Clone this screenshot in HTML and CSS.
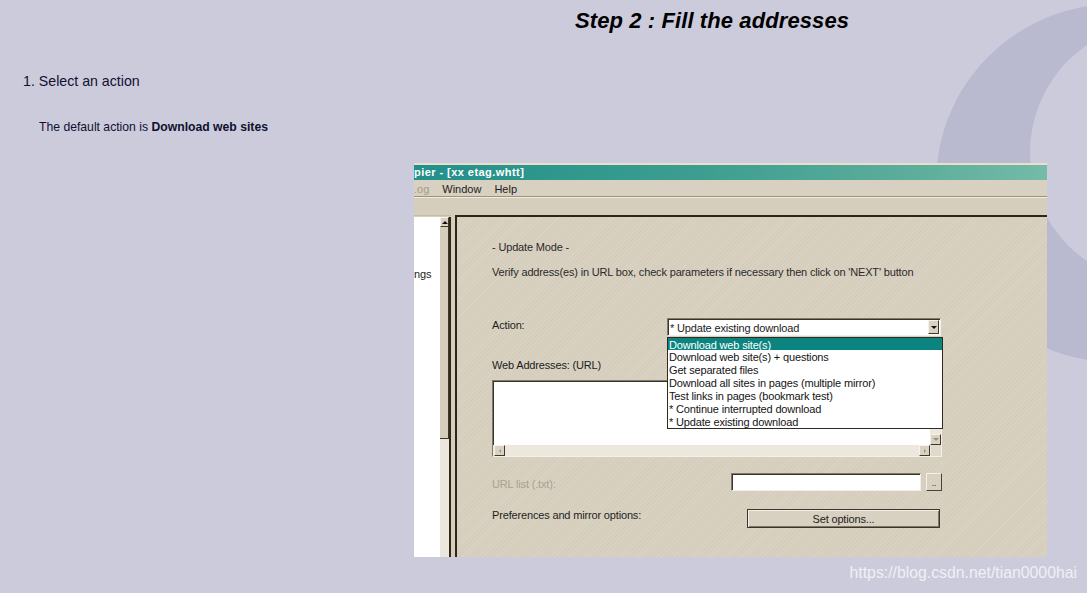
FILE: index.html
```html
<!DOCTYPE html>
<html lang="en">
<head>
<meta charset="utf-8">
<title>Step 2 : Fill the addresses</title>
<link rel="stylesheet" href="styles.css">
</head>
<body>
<div class="page">
  <svg class="deco" width="1087" height="593" viewBox="0 0 1087 593" aria-hidden="true">
    <circle cx="1115" cy="183" r="179" fill="#b9b9d0"/>
    <circle cx="1161" cy="153" r="131" fill="#cccbdc"/>
  </svg>

  <h1 class="title">Step 2 : Fill the addresses</h1>
  <p class="step">1. Select an action</p>
  <p class="default">The default action is <b>Download web sites</b></p>

  <div class="shot">
    <div class="topedge"></div>
    <div class="titlebar">pier - [xx etag.whtt]</div>
    <div class="menubar">
      <span class="menu-dis">.og</span>
      <span class="menu-item">Window</span>
      <span class="menu-item">Help</span>
    </div>
    <div class="toolbar"></div>
    <div class="work">
      <div class="tree">
        <div class="treelist"><span class="tree-item">ngs</span></div>
        <div class="vscroll">
          <div class="sbtn"><span class="tri tri-up"></span></div>
          <div class="thumb"></div>
          <div class="track"></div>
        </div>
      </div>
      <div class="gap"></div>
      <div class="panel">
        <div class="mode">- Update Mode -</div>
        <div class="verify">Verify address(es) in URL box, check parameters if necessary then click on 'NEXT' button</div>

        <div class="row row-action">
          <div class="label label-action">Action:</div>
          <div class="combo">
            <div class="combo-text">* Update existing download</div>
            <div class="combo-btn"><span class="tri tri-down"></span></div>
            <ul class="dropdown">
              <li class="sel">Download web site(s)</li>
              <li>Download web site(s) + questions</li>
              <li>Get separated files</li>
              <li>Download all sites in pages (multiple mirror)</li>
              <li>Test links in pages (bookmark test)</li>
              <li>* Continue interrupted download</li>
              <li>* Update existing download</li>
            </ul>
          </div>
        </div>

        <div class="weblabel">Web Addresses: (URL)</div>
        <div class="textarea">
          <div class="ta-body">
            <div class="ta-white"></div>
            <div class="ta-vs">
              <div class="ta-vtrack"></div>
              <div class="sbtn sbtn-sm"><span class="tri tri-down tri-grey"></span></div>
            </div>
          </div>
          <div class="ta-hs">
            <div class="sbtn sbtn-sm"><span class="tri tri-left"></span></div>
            <div class="ta-htrack"></div>
            <div class="sbtn sbtn-sm"><span class="tri tri-right"></span></div>
            <div class="ta-corner"></div>
          </div>
        </div>

        <div class="row row-url">
          <div class="label label-dis">URL list (.txt):</div>
          <div class="urlgroup">
            <div class="field"></div>
            <div class="dots">..</div>
          </div>
        </div>

        <div class="row row-prefs">
          <div class="label">Preferences and mirror options:</div>
          <div class="setbtn">Set options...</div>
        </div>
      </div>
    </div>
  </div>

  <div class="watermark">https://blog.csdn.net/tian0000hai</div>
</div>
</body>
</html>
```

FILE: styles.css
```css
* { box-sizing: border-box; }

body {
  margin: 0;
  background: #cccbdc;
}

.page {
  position: relative;
  width: 1087px;
  height: 593px;
  overflow: hidden;
  background: #cccbdc;
  font-family: "Liberation Sans", Arial, sans-serif;
}

.deco {
  position: absolute;
  left: 0;
  top: 0;
}

.title,
.step,
.default,
.shot {
  position: relative;
}

.title {
  margin: 0;
  padding: 9px 0 0 575px;
  font-size: 22px;
  line-height: 24px;
  font-weight: bold;
  font-style: italic;
  letter-spacing: 0.1px;
  color: #000;
}

.step {
  margin: 39px 0 0 0;
  padding-left: 23px;
  font-size: 14.2px;
  line-height: 18px;
  color: #101030;
}

.default {
  margin: 29px 0 0 0;
  padding-left: 39px;
  font-size: 12.2px;
  line-height: 16px;
  color: #101030;
}

.default b { font-weight: bold; }

/* ---------- window screenshot ---------- */
.shot {
  margin: 28px 0 0 414px;
  width: 633px;
  height: 394px;
  display: flex;
  flex-direction: column;
  background: #d6cebd;
  font-family: "Liberation Sans", Arial, sans-serif;
  font-size: 11px;
  letter-spacing: -0.16px;
  color: #1c1c1c;
  overflow: hidden;
}

.topedge {
  height: 2px;
  background: #e9dfcc;
}

.titlebar {
  height: 15px;
  line-height: 15px;
  color: #fff;
  font-weight: bold;
  font-size: 11px;
  letter-spacing: 0.45px;
  background: linear-gradient(to right, #22908a, #3c9e90 45%, #5eae9c 80%, #74bba8);
}

.menubar {
  height: 16px;
  display: flex;
  align-items: center;
  gap: 13px;
  background: #d8d0c0;
  padding-top: 1px;
  letter-spacing: 0;
}

.menu-dis { color: #a49c8c; }

.toolbar {
  height: 19px;
  border-top: 1px solid #9e927c;
  box-shadow: inset 0 1px 0 #f1ece2;
  background: #d6cebd;
}

.work {
  flex: 1;
  display: flex;
  min-height: 0;
}

.tree {
  width: 37px;
  display: flex;
  border-top: 1px solid #c4baa6;
}

.treelist {
  width: 26px;
  background: #fff;
  padding-top: 51px;
  line-height: 13px;
  margin-top: 1px;
}

.tree-item { display: block; }

.vscroll {
  width: 11px;
  display: flex;
  flex-direction: column;
  border-right: 2px solid #2e2818;
  margin-top: 1px;
}

.sbtn {
  width: 9px;
  height: 10px;
  background: #d9d2c3;
  border: 1px solid;
  border-color: #f6f2ea #3e382c #3e382c #f6f2ea;
  display: flex;
  align-items: center;
  justify-content: center;
  flex: none;
}

.thumb {
  height: 212px;
  background: #d6cebd;
  border-bottom: 1px solid #3e382c;
  border-right: 1px solid #3e382c;
}

.track {
  flex: 1;
  background: #ebe7dc;
}

.tri {
  width: 0;
  height: 0;
  border: 3px solid transparent;
}

.tri-up { border-bottom-color: #111; border-top-width: 0; }
.tri-down { border-top-color: #111; border-bottom-width: 0; }
.tri-grey { border-top-color: #9a9080; }
.tri-left { border-right-color: #9a9080; border-width: 2px 2px 2px 0; }
.tri-right { border-left-color: #9a9080; border-width: 2px 0 2px 2px; }

.gap {
  width: 4px;
}

.panel {
  flex: 1;
  border-left: 2px solid #2c2618;
  border-top: 2px solid #2c2618;
  padding: 0 105px 0 35px;
  background-color: #d6cebd;
  background-image: repeating-linear-gradient(135deg, rgba(255,255,255,0.10) 0 1px, rgba(0,0,0,0) 1px 3px);
  line-height: 13px;
}

.mode { margin-top: 24px; color: #2a2a2a; }

.verify {
  margin-top: 12px;
  white-space: nowrap;
  color: #2a2a2a;
}

.row {
  display: flex;
  justify-content: space-between;
  align-items: flex-start;
}

.row-action { margin-top: 39px; height: 18px; }

.label { color: #1e1e1e; white-space: nowrap; }
.label-action { padding-top: 1px; }
.label-dis { color: #a9a190; padding-top: 5px; }

.combo {
  position: relative;
  width: 274px;
  height: 18px;
  margin-right: 1px;
  background: #fff;
  border: 1px solid;
  border-color: #827a68 #f4f0e8 #f4f0e8 #827a68;
  box-shadow: inset 1px 1px 0 #3a3426;
  display: flex;
  align-items: center;
}

.combo-text {
  flex: 1;
  padding-left: 2px;
  padding-top: 2px;
  white-space: nowrap;
}

.combo-btn {
  width: 11px;
  height: 14px;
  margin-right: 1px;
  background: #d9d2c3;
  border: 1px solid;
  border-color: #f6f2ea #3e382c #3e382c #f6f2ea;
  display: flex;
  align-items: center;
  justify-content: center;
}

.dropdown {
  position: absolute;
  left: -1px;
  top: 18px;
  width: 276px;
  height: 92px;
  margin: 0;
  padding: 0;
  list-style: none;
  background: #fff;
  border: 1px solid #2e2a24;
  z-index: 2;
}

.dropdown li {
  height: 13px;
  line-height: 13px;
  padding: 1px 0 0 1px;
  white-space: nowrap;
  color: #141414;
}

.dropdown li.sel {
  background: #0b8480;
  color: #fff;
  height: 12px;
  line-height: 12px;
}

.weblabel { margin-top: 23px; }

.textarea {
  margin-top: 8px;
  width: 450px;
  height: 77px;
  display: flex;
  flex-direction: column;
  border: 1px solid;
  border-color: #827a68 #f4f0e8 #f4f0e8 #827a68;
  box-shadow: inset 1px 1px 0 #3a3426;
  background: #fff;
}

.ta-body {
  flex: 1;
  display: flex;
}

.ta-white { flex: 1; }

.ta-vs {
  width: 11px;
  display: flex;
  flex-direction: column;
}

.ta-vtrack { flex: 1; background: #ece8de; }

.sbtn-sm { width: 11px; height: 11px; }

.ta-hs {
  height: 11px;
  display: flex;
  background: #ece8de;
  padding-left: 1px;
}

.ta-htrack { flex: 1; }

.ta-corner {
  width: 11px;
  background: #e0dacd;
  border-left: 1px solid #ece8de;
}

.row-url { margin-top: 16px; height: 18px; }

.urlgroup {
  width: 211px;
  display: flex;
  gap: 5px;
}

.field {
  width: 190px;
  height: 18px;
  background: #fff;
  border: 1px solid;
  border-color: #827a68 #f4f0e8 #f4f0e8 #827a68;
  box-shadow: inset 1px 1px 0 #3a3426;
}

.dots {
  width: 16px;
  height: 18px;
  background: #d8d0c0;
  border: 1px solid;
  border-color: #f4f0e8 #4a4434 #4a4434 #f4f0e8;
  text-align: center;
  line-height: 18px;
  font-size: 9px;
  color: #333;
}

.row-prefs { margin-top: 18px; height: 19px; }

.setbtn {
  width: 193px;
  height: 19px;
  margin-right: 2px;
  border: 1px solid #3c3628;
  box-shadow: inset 1px 1px 0 #f4f0e8, inset -1px -1px 0 #7e766a;
  background: #d8d0c0;
  text-align: center;
  line-height: 18px;
  color: #1e1e1e;
}

.watermark {
  position: absolute;
  right: 10px;
  bottom: 11px;
  font-family: "Liberation Sans", Arial, sans-serif;
  font-size: 15.8px;
  line-height: 18px;
  color: rgba(255, 255, 255, 0.72);
}
```
